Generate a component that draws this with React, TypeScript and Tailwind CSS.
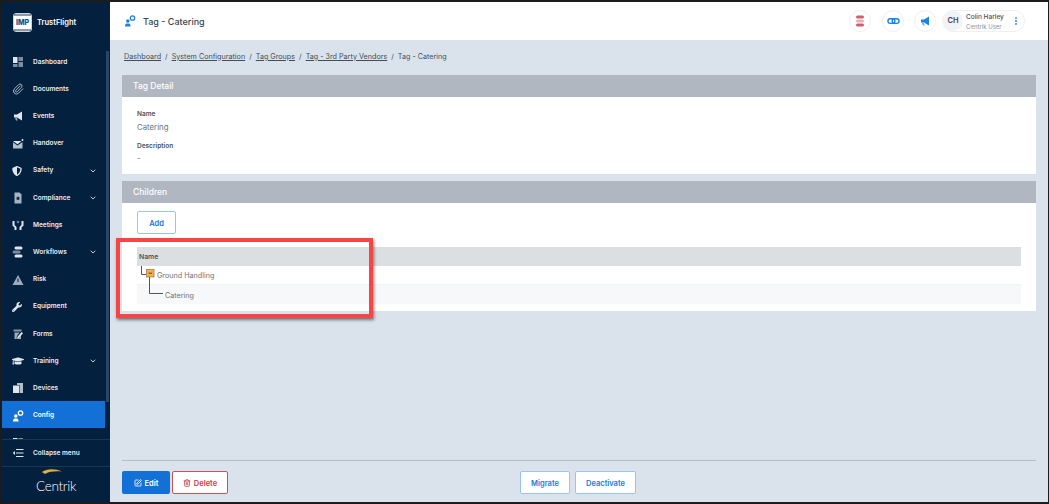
import { ChevronDown, EllipsisVertical, Paperclip, SquarePen, Trash2 } from "lucide-react";
import { FaGraduationCap, FaShieldAlt, FaWrench } from "react-icons/fa";
import type { ReactNode } from "react";

const ic = "w-3 h-3 text-[#dfe6ee]";

function DashboardIcon() {
  return (
    <svg viewBox="0 0 12 12" className={ic} fill="currentColor">
      <rect x="1" y="1" width="4.5" height="6" />
      <rect x="6.5" y="1" width="4.5" height="4" opacity=".55" />
      <rect x="1" y="8" width="4.5" height="3" opacity=".55" />
      <rect x="6.5" y="6" width="4.5" height="5" opacity=".55" />
    </svg>
  );
}

function Megaphone({ className = ic }: { className?: string }) {
  return (
    <svg viewBox="0 0 12 12" className={className} fill="currentColor">
      <path d="M2 4.5h3L10 1.500v9L5 7.500H2z" />
      <path d="M3 8h2l.6 2.500H4z" opacity=".7" />
    </svg>
  );
}

function HandoverIcon() {
  return (
    <svg viewBox="0 0 12 12" className={ic} fill="currentColor">
      <path d="M1 3h8.5L5.5 6.200 1 3z" />
      <path d="M1 4.200l4.500 3.200L10.500 4v6.500H1z" opacity=".8" />
      <circle cx="10.500" cy="2" r="1" />
    </svg>
  );
}

function ComplianceIcon() {
  return (
    <svg viewBox="0 0 12 12" className={ic} fill="currentColor">
      <path d="M2.500 0.500h5l2 2v9h-7z" opacity=".75" />
      <path d="M6 4l.7 1.500 1.500.2-1.100 1 .3 1.600L6 7.500l-1.400.8.300-1.600-1.100-1 1.500-.2z" fill="#03203f" />
    </svg>
  );
}

function MeetingsIcon() {
  return (
    <svg viewBox="0 0 12 12" className={ic} fill="currentColor">
      <path d="M0.500 2h2v4l2 2v3H2.500V8.500L0.500 6.500z" />
      <path d="M11.500 2h-2v4l-2 2v3h2V8.500l2-2z" />
      <circle cx="6" cy="3" r="1.300" opacity=".5" />
    </svg>
  );
}

function WorkflowsIcon() {
  return (
    <svg viewBox="0 0 12 12" className={ic} fill="currentColor">
      <rect x="2.500" y="0.500" width="8" height="3" rx="1.500" />
      <rect x="0.500" y="4.500" width="8" height="3" rx="1.500" opacity=".55" />
      <rect x="2.500" y="8.500" width="8" height="3" rx="1.500" />
    </svg>
  );
}

function RiskIcon() {
  return (
    <svg viewBox="0 0 12 12" className={ic} fill="currentColor">
      <path d="M6 1l5.500 10H.5z" opacity=".7" />
      <path d="M5.500 4.500h1v3.500h-1z" fill="#03203f" />
    </svg>
  );
}

function FormsIcon() {
  return (
    <svg viewBox="0 0 12 12" className={ic} fill="currentColor">
      <path d="M1.500 1.500h8v2h-8z" opacity=".6" />
      <path d="M2.500 4.500h5L5 8l-.5 2.500 2.500-.5 2-2.500V11h-6.500z" opacity=".7" />
      <path d="M9.500 4l1.500 1.200L7 10l-1.800.4.300-1.700z" />
    </svg>
  );
}

function DevicesIcon() {
  return (
    <svg viewBox="0 0 12 12" className={ic} fill="currentColor">
      <rect x="1" y="3.500" width="6" height="7.500" />
      <path d="M5 1h6v10H7.500V3H5z" opacity=".8" />
    </svg>
  );
}

function ConfigIcon({ className = "w-3 h-3 text-white" }: { className?: string }) {
  return (
    <svg viewBox="0 0 12 12" className={className} fill="currentColor">
      <circle cx="3.800" cy="6" r="1.800" />
      <path d="M1 11.500c0-2.500 1-3 2.800-3s2.800.5 2.800 3z" />
      <circle cx="8.500" cy="3" r="2.200" fill="none" stroke="currentColor" strokeWidth="1.300" />
    </svg>
  );
}

function CollapseIcon() {
  return (
    <svg viewBox="0 0 12 12" className={ic} fill="none" stroke="currentColor" strokeWidth="1">
      <path d="M4 2.500h7.500M4 6h7.500M4 9.500h7.500" />
      <path d="M3 4L.8 6 3 8z" fill="currentColor" stroke="none" />
    </svg>
  );
}

const items: { label: string; icon: ReactNode; more?: boolean; active?: boolean }[] = [
  { label: "Dashboard", icon: <DashboardIcon /> },
  { label: "Documents", icon: <Paperclip className={ic} strokeWidth={1.5} /> },
  { label: "Events", icon: <Megaphone /> },
  { label: "Handover", icon: <HandoverIcon /> },
  { label: "Safety", icon: <FaShieldAlt className="w-2.5 h-2.5 text-[#dfe6ee]" />, more: true },
  { label: "Compliance", icon: <ComplianceIcon />, more: true },
  { label: "Meetings", icon: <MeetingsIcon /> },
  { label: "Workflows", icon: <WorkflowsIcon />, more: true },
  { label: "Risk", icon: <RiskIcon /> },
  { label: "Equipment", icon: <FaWrench className="w-2.5 h-2.5 text-[#dfe6ee]" /> },
  { label: "Forms", icon: <FormsIcon /> },
  { label: "Training", icon: <FaGraduationCap className={ic} />, more: true },
  { label: "Devices", icon: <DevicesIcon /> },
  { label: "Config", icon: <ConfigIcon />, active: true },
  // only the top edge of this one shows above the collapse row
  { label: "", icon: <DashboardIcon /> },
];

function Sidebar() {
  return (
    <aside className="w-[108px] shrink-0 bg-[#03203f] flex flex-col text-[#e8edf3]">
      <div className="h-[40px] flex items-center pl-[11px] gap-[5px] shrink-0">
        <div className="w-[19px] h-[19px] rounded-[3px] border border-[#c9d2dc] bg-[#03203f] flex flex-col overflow-hidden">
          <div className="h-[2px] bg-[#8d9aa9]" />
          <div className="flex-1 bg-white text-[#0d4f8b] text-[7px] leading-none font-extrabold flex items-center justify-center">IMP</div>
          <div className="h-[2px] bg-[#8d9aa9]" />
        </div>
        <span className="pt-[2px] text-[7.5px] font-semibold text-white">TrustFlight</span>
      </div>
      <div className="flex-1 flex min-h-0 overflow-hidden">
        <nav className="flex-1 pt-[5.5px] min-w-0 flex flex-col">
          {items.map((it, i) => (
            <div
              key={i}
              className={`h-[27.2px] shrink-0 flex items-center pl-[10px] pr-[8px] ${it.active ? "bg-[#1270d6] text-white" : ""}`}
            >
              <span className="w-[21px] pt-[2px] flex">{it.icon}</span>
              <span className="flex-1 pt-[3px] text-[6.5px] font-semibold">{it.label}</span>
              {it.more && <ChevronDown className="w-2 h-2 mt-[2px]" strokeWidth={2.5} />}
            </div>
          ))}
        </nav>
        <div className="w-[3px] mr-[1px] mt-[9px] mb-[37px] ml-[1px] bg-[#2b4565] shrink-0" />
      </div>
      <div className="h-[28px] shrink-0 border-y border-[#1b3654] flex items-center pl-[10px]">
        <span className="w-[21px] flex"><CollapseIcon /></span>
        <span className="pt-[2px] text-[6.5px] font-semibold">Collapse menu</span>
      </div>
      <div className="h-[35px] shrink-0 flex items-center justify-center">
        <div className="relative pt-[1px]">
          <svg viewBox="0 0 20 5" className="absolute left-[6px] top-[-3px] w-[20px] h-[5px]">
            <path d="M0 3C5 -.5 13 -.5 20 2.500 13 2 7 2.500 3 5z" fill="#e0b23c" />
          </svg>
          <span className="font-['Lato',sans-serif] font-light text-[13.5px] leading-none text-white tracking-[-0.3px]">Centrik</span>
        </div>
      </div>
    </aside>
  );
}

function Circle({ children, className = "" }: { children: ReactNode; className?: string }) {
  return (
    <div className={`w-[22px] h-[22px] rounded-full border border-[#eef0f2] flex items-center justify-center ${className}`}>
      {children}
    </div>
  );
}

function Header() {
  return (
    <header className="h-[38px] shrink-0 bg-white flex items-center pl-[14px] pr-[23px]">
      <ConfigIcon className="w-3 h-3 text-[#1c82e0] mr-[7px]" />
      <h1 className="flex-1 pt-[2px] text-[9px] font-medium text-[#3d4550] whitespace-pre">Tag - Catering</h1>
      <div className="flex items-center">
        <Circle>
          <svg viewBox="0 0 10 12" className="w-[10px] h-[12px]" fill="#c4344a">
            <rect x="1" y="0.500" width="8" height="3" rx="1.500" opacity=".8" />
            <rect x="1" y="4.500" width="8" height="3" rx="1.500" opacity=".4" />
            <rect x="1" y="8.500" width="8" height="3" rx="1.500" opacity=".8" />
          </svg>
        </Circle>
        <Circle className="ml-[11px]">
          <svg viewBox="0 0 14 8" className="w-[13px] h-[8px]" fill="none" stroke="#1c82e0" strokeWidth="1.500">
            <rect x="1" y="1.500" width="7.500" height="5" rx="2.500" />
            <rect x="5.500" y="1.500" width="7.500" height="5" rx="2.500" />
          </svg>
        </Circle>
        <Circle className="ml-[10px]">
          <Megaphone className="w-3 h-3 text-[#1c82e0]" />
        </Circle>
        <div className="ml-[6px] w-[83px] h-[22px] rounded-full border border-[#eef0f2] flex items-center">
          <div className="w-[20px] h-[20px] rounded-full bg-[#f2f3f4] text-[7.5px] font-semibold text-[#3d4550] flex items-center justify-center shrink-0">CH</div>
          <div className="ml-[3px] pt-[1px] flex-1 leading-none">
            <div className="text-[6.5px] font-medium text-[#4a525d]">Colin Harley</div>
            <div className="text-[6px] text-[#8b929b] mt-[3.5px]">Centrik User</div>
          </div>
          <EllipsisVertical className="w-[10px] h-[10px] text-[#1c82e0] mr-[3px]" strokeWidth={2.5} />
        </div>
      </div>
    </header>
  );
}

function Crumbs() {
  const links = ["Dashboard", "System Configuration", "Tag Groups", "Tag - 3rd Party Vendors"];
  return (
    <div className="h-[35px] flex items-center pl-[2px] pb-[1px] text-[7.2px] text-[#454d58] whitespace-pre">
      {links.map((l) => (
        <span key={l}>
          <span className="underline">{l}</span>
          <span className="mx-[4px]">/</span>
        </span>
      ))}
      <span>Tag - Catering</span>
    </div>
  );
}

function PanelTitle({ children }: { children: ReactNode }) {
  return (
    <div className="h-[22px] bg-[#b0b7c1] flex items-center px-[11px] text-[8.5px] font-medium text-white">
      {children}
    </div>
  );
}

function OutlineBtn({ children, className = "" }: { children: ReactNode; className?: string }) {
  return (
    <button className={`h-[23px] pt-[1.5px] bg-white border border-[#9cc3ef] rounded-[2px] text-[7.5px] font-semibold text-[#1c78de] flex items-center justify-center ${className}`}>
      {children}
    </button>
  );
}

function Tree() {
  return (
    <div className="text-[7.2px] text-[#6e7278]">
      <div className="h-[19px] bg-[#dcdfe2] flex items-center px-[2px] pt-[2px] text-[6.8px] font-semibold text-[#4b525c]">Name</div>
      <div className="h-[19px] bg-white flex items-center pl-[4px] border-b border-[#f1f2f4]">
        <svg viewBox="0 0 16 19" className="w-[16px] h-[19px]">
          <path d="M0.500 0v8.500H5" fill="none" stroke="#555" strokeWidth="1" />
          <rect x="5.500" y="3.500" width="7.500" height="7.500" fill="#f5b04a" stroke="#94743f" strokeWidth=".7" />
          <path d="M7.500 7.200h3.500" stroke="#5a4420" strokeWidth="1" />
        </svg>
        <span className="pt-[3px]">Ground Handling</span>
      </div>
      <div className="relative h-[19px] bg-[#f7f8f9] flex items-center pl-[28px]">
        <svg viewBox="0 0 14 17" className="absolute left-[12px] top-[-8px] w-[14px] h-[17px]">
          <path d="M0.500 0v16.500H14" fill="none" stroke="#555" strokeWidth="1" />
        </svg>
        <span className="pt-[3px]">Catering</span>
      </div>
    </div>
  );
}

export default function App() {
  return (
    <div className="w-[1049px] h-[504px] bg-[#1c1c1c] pt-[2px] pl-[2px] pb-[2px] pr-px overflow-hidden font-['Inter',sans-serif]">
      <div className="relative h-full flex bg-[#dae3ec]">
        <Sidebar />
        <main className="flex-1 min-w-0 flex flex-col">
          <Header />
          <div className="flex-1 flex flex-col px-[12px] min-h-0">
            <Crumbs />
            <section className="bg-white mb-[7px]">
              <PanelTitle>Tag Detail</PanelTitle>
              <div className="h-[77px] px-[15px] pt-[14px] leading-none">
                <div className="text-[6.5px] font-semibold text-[#4b525c]">Name</div>
                <div className="text-[7.8px] text-[#6c737d] mt-[6px]">Catering</div>
                <div className="text-[6.5px] font-semibold text-[#4b525c] mt-[12px]">Description</div>
                <div className="text-[7.8px] text-[#6c737d] mt-[5px]">-</div>
              </div>
            </section>
            <section className="bg-white">
              <PanelTitle>Children</PanelTitle>
              <div className="px-[15px] pt-[8px] pb-[7px]">
                <OutlineBtn className="w-[39px] mb-[13px]">Add</OutlineBtn>
                <Tree />
              </div>
            </section>
            <div className="mt-auto border-t border-[#b3bcc7] pt-[10px] pb-[8px] flex">
              <button className="w-[48px] h-[23px] pt-[1.5px] bg-[#1270d6] rounded-[2px] text-white text-[7.5px] font-semibold flex items-center justify-center gap-[3px]">
                <SquarePen className="w-2 h-2" strokeWidth={2.5} />
                Edit
              </button>
              <button className="ml-[2px] w-[56px] h-[23px] pt-[1.5px] bg-white border border-[#c9525a] rounded-[2px] text-[#c5424c] text-[7.5px] font-semibold flex items-center justify-center gap-[3px]">
                <Trash2 className="w-2 h-2" strokeWidth={2.5} />
                Delete
              </button>
              <OutlineBtn className="ml-[292px] w-[50px]">Migrate</OutlineBtn>
              <OutlineBtn className="ml-[5px] w-[61px]">Deactivate</OutlineBtn>
            </div>
          </div>
        </main>
        {/* red annotation drawn over the screenshot */}
        <div className="absolute left-[114px] top-[236px] w-[257px] h-[80px] border-[4px] border-[#f54545] shadow-[1px_2px_3px_rgba(0,0,0,0.5)]" />
      </div>
    </div>
  );
}
